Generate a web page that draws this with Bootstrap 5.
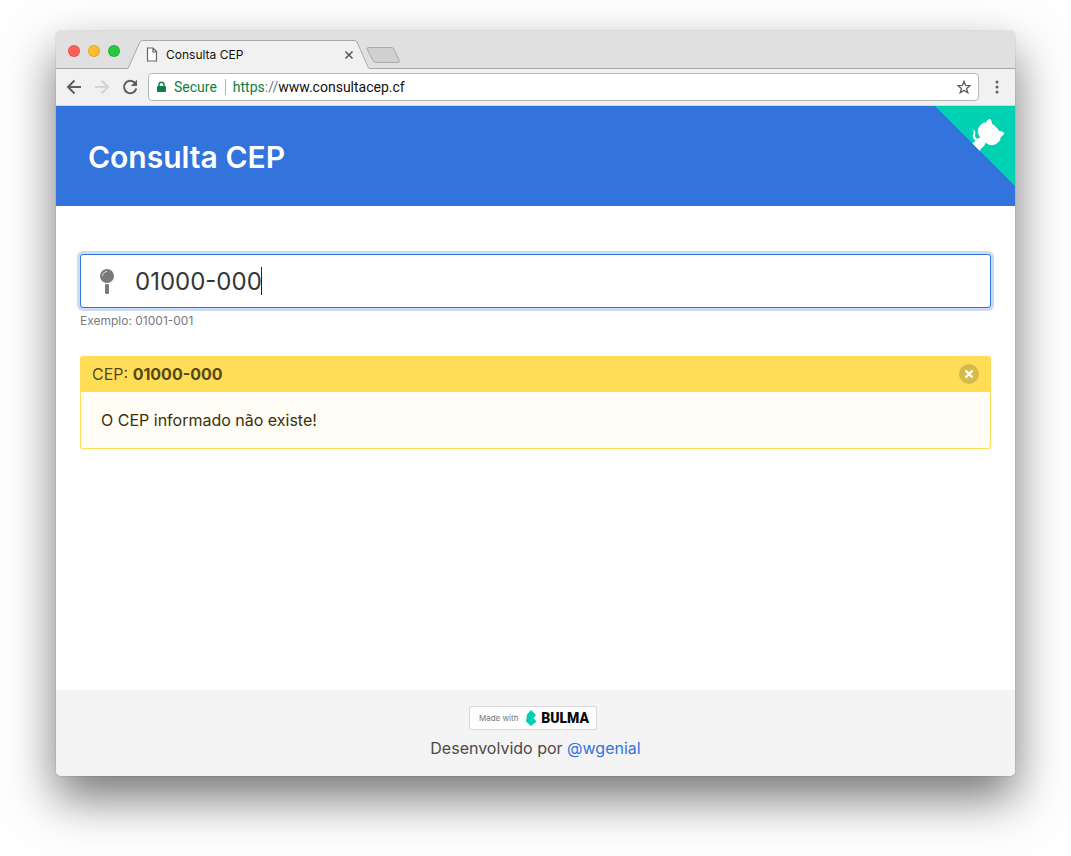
<!DOCTYPE html>
<html lang="pt-BR">
<head>
<meta charset="utf-8">
<meta name="viewport" content="width=device-width, initial-scale=1">
<title>Consulta CEP</title>
<link rel="stylesheet" href="https://cdn.jsdelivr.net/npm/bootstrap@5.3.0/dist/css/bootstrap.min.css">
<style>
body { font-family: Inter, "Liberation Sans", sans-serif; background: #fefefe; color: #4a4a4a; padding: 31px 56px 80px; }
.window { min-height: calc(100vh - 111px); border-radius: 5px; box-shadow: 0 0 1px rgba(0,0,0,.5), 0 22px 48px rgba(0,0,0,.54); }
.tabstrip { height: 38px; background: #e0e0e0; border-bottom: 1px solid #a8a8a8; border-radius: 5px 5px 0 0; padding-left: 12px; }
.light { width: 12px; height: 12px; border-radius: 50%; border: 1px solid rgba(0,0,0,.12); padding: 0; }
.lights { gap: 8px; padding-top: 14px; width: 60px; }
.page-tab { width: 242px; height: 29px; margin-bottom: -1px; padding: 0 16px 0 18px; font-size: 12px; line-height: 29px; color: #111; }
.page-tab .shape { left: 0; top: 0; }
.tab-btn { border: 0; background: none; padding: 0; display: flex; color: #5a5a5a; }
.new-tab { margin: 0 0 4px -4px; }
.toolbar { height: 37px; background: #f1f1f1; border-bottom: 1px solid #d8d8d8; padding: 0 12px 0 10px; gap: 12px; }
.address { height: 28px; border: 1px solid #b8b8b8; border-radius: 4px; background: #fff; margin-left: -2px; padding: 0 7px 0 8px; font: 14px/26px Roboto, sans-serif; }
.secure { color: #0b8043; }
.address .rule { width: 1px; height: 16px; background: #b0b0b0; margin: 0 7px 0 8px; }
.url { color: #111; }
.hero { background: #3273dc; height: 100px; padding: 2px 32px 0; }
.hero h1 { font-size: 30px; line-height: 36px; font-weight: 600; color: #fff; }
.corner { top: 0; right: 0; }
.page { padding: 48px 24px; }
.cep-input { height: 54px; border: 1px solid #3273dc; border-radius: 3px; padding: 0 54px; font-size: 24px; color: #363636; }
.cep-input, .cep-input:focus { border-color: #3273dc; box-shadow: 0 0 0 3px rgba(50,115,220,.25); }
.pin { left: 19px; top: 15px; }
.caret { left: 181px; top: 13px; width: 1px; height: 28px; background: #222; }
.hint { font-size: 12px; line-height: 18px; color: #7a7a7a; margin-top: 4px; margin-bottom: 26px; }
.notice { border-radius: 3px; line-height: 24px; }
.notice-head { background: #ffdd57; color: rgba(0,0,0,.7); height: 36px; padding: 0 12px; border-radius: 3px 3px 0 0; }
.notice-head strong { color: #544817; }
.notice-body { background: #fffdf5; color: #3b3108; border: 1px solid #ffdd57; border-top: 0; border-radius: 0 0 3px 3px; padding: 16px 20px; }
.dismiss { width: 20px; height: 20px; border: 0; border-radius: 50%; background: #d6ba4b; padding: 0; display: flex; }
.page-foot { background: #f4f4f4; height: 86px; padding-top: 16px; border-radius: 0 0 5px 5px; }
.page-foot a { color: #3273dc; text-decoration: none; }
.page-foot .made { width: 128px; height: 24px; border: 1px solid #d9d9d9; border-radius: 2px; background: #fdfdfd; margin-right: 5px; padding: 0 7px 0 9px; font-size: 8px; line-height: 22px; color: #777; }
.page-foot .made b { font: 900 14px/22px Roboto, sans-serif; color: #0a0a0a; }
.credit { line-height: 24px; margin-top: 6px; }
</style>
</head>
<body>
<div class="window d-flex flex-column">
  <div class="tabstrip d-flex">
    <div class="lights d-flex">
      <button class="light" style="background:#ff5f57" aria-label="Close window"></button>
      <button class="light" style="background:#ffbd2e" aria-label="Minimize"></button>
      <button class="light" style="background:#28c940" aria-label="Zoom"></button>
    </div>
    <div class="page-tab position-relative align-self-end d-flex align-items-center">
      <svg class="shape position-absolute" width="242" height="29" fill="#f1f1f1" stroke="#a8a8a8"><path stroke="none" d="M0 29L12 2Q13 .5 15 .5H226Q228 .5 229 2L241 27 242 29Z"/><path fill="none" d="M0 28.500L12 2Q13 .5 15 .5H226Q228 .5 229 2L240 27Q241 28.500 242 28.500"/></svg>
      <svg class="position-relative me-2" width="12" height="15" fill="#fff" stroke="#666" stroke-width="1.200"><path d="M1.500 1H7L10.500 4.500V14H1.500ZM7 1V5H10.500"/></svg>
      <span class="position-relative">Consulta CEP</span>
      <button class="tab-btn position-relative ms-auto" aria-label="Close tab"><svg width="10" height="10" stroke="currentColor" stroke-width="1.600"><path d="M1.500 1.500l7 7M8.500 1.500l-7 7"/></svg></button>
    </div>
    <button class="tab-btn new-tab align-self-end" aria-label="New tab"><svg width="36" height="18" fill="#d0d0d0" stroke="#aaa"><path d="M1 3Q.5 1.500 3 1.500H25Q27 1.500 28 3L33 14Q34 16.500 32 16.500H10Q8 16.500 7 14.500Z"/></svg></button>
  </div>
  <div class="toolbar d-flex align-items-center">
    <button class="tab-btn" aria-label="Back"><svg width="16" height="16" fill="none" stroke="#5f5f5f" stroke-width="2"><path d="M15 8H2M8.500 1.500L2 8l6.500 6.500"/></svg></button>
    <button class="tab-btn" aria-label="Forward"><svg width="16" height="16" fill="none" stroke="#d3d3d3" stroke-width="2"><path d="M1 8h13M7.500 1.500L14 8l-6.500 6.500"/></svg></button>
    <button class="tab-btn" aria-label="Reload"><svg width="16" height="16" fill="none" stroke="#5f5f5f" stroke-width="2"><path d="M13 4A6.200 6.200 0 1 0 14.300 9.500"/><path fill="#5f5f5f" stroke="none" d="M15 .8V7H8.800Z"/></svg></button>
    <div class="address d-flex align-items-center flex-grow-1">
      <svg class="me-2" width="9" height="12" viewBox="0 0 10 12" fill="#0b8043"><path d="M1.500 5V3.500a3.500 3.500 0 0 1 7 0V5H9Q10 5 10 6v4.500Q10 11.500 9 11.500H1Q0 11.500 0 10.500V6Q0 5 1 5ZM3 5H7V3.500a2 2 0 0 0-4 0Z"/></svg>
      <span class="secure">Secure</span><span class="rule"></span>
      <span class="url"><span class="secure">https</span><span class="text-secondary">://</span>www.consultacep.cf</span>
      <button class="tab-btn ms-auto" aria-label="Bookmark"><svg width="14" height="14" viewBox="0 0 16 16" fill="none" stroke="#5f5f5f" stroke-width="1.500"><path d="M8 1.500l1.800 4.700 5.200.2-4.100 3.200 1.500 5L8 11.800l-4.400 2.800 1.500-5L1 6.400l5.200-.2Z"/></svg></button>
    </div>
    <button class="tab-btn" aria-label="Menu"><svg width="12" height="14" fill="#5f5f5f"><circle cx="6" cy="2" r="1.500"/><circle cx="6" cy="7" r="1.500"/><circle cx="6" cy="12" r="1.500"/></svg></button>
  </div>
  <header class="hero position-relative d-flex align-items-center">
    <h1 class="mb-0">Consulta CEP</h1>
    <a class="corner position-absolute d-flex" href="#" aria-label="GitHub">
      <svg width="80" height="80" viewBox="0 0 250 250" fill="#fff"><path fill="#00d1b2" d="M0 0L250 250V0Z"/><path d="M128.3,109.0 C113.8,99.7 119.0,89.6 119.0,89.6 C122.0,82.7 120.5,78.6 120.5,78.6 C119.2,72.0 123.4,76.3 123.4,76.3 C127.3,80.9 125.5,87.3 125.5,87.3 C122.9,97.6 130.6,101.9 134.4,103.2"/><path d="M115.0,115.0 C114.9,115.1 118.7,116.5 119.8,115.4 L133.7,101.6 C136.9,99.2 139.9,98.4 142.2,98.6 C133.8,88.0 127.5,74.4 143.8,58.0 C148.5,53.4 154.0,51.2 159.7,51.0 C160.3,49.4 163.2,43.6 171.4,40.1 C171.4,40.1 176.1,42.5 178.8,56.2 C183.1,58.6 187.2,61.8 190.9,65.4 C194.5,69.0 197.7,73.2 200.1,77.6 C213.8,80.2 216.3,84.9 216.3,84.9 C212.7,93.1 206.9,96.0 205.4,96.6 C205.1,102.4 203.0,107.8 198.3,112.5 C181.9,128.9 168.3,122.5 157.7,114.1 C157.9,116.9 156.7,120.9 152.7,124.9 L141.0,136.5 C139.8,137.7 141.6,141.9 141.8,141.8 Z"/></svg>
    </a>
  </header>
  <main class="page flex-grow-1 bg-white">
    <div class="position-relative">
      <input class="form-control cep-input" type="text" id="cep" value="01000-000" aria-label="CEP" aria-describedby="hint">
      <svg class="pin position-absolute" width="16" height="26" fill="#7a7a7a"><circle cx="8" cy="7" r="7"/><rect x="6" y="15" width="4" height="10" rx="1"/><path d="M3.500 7A4.500 4.500 0 0 1 8 2.500" fill="none" stroke="#ddd"/></svg>
      <span class="caret position-absolute"></span>
    </div>
    <p class="hint" id="hint">Exemplo: 01001-001</p>
    <article class="notice">
      <div class="notice-head d-flex align-items-center justify-content-between">
        <span>CEP: <strong>01000-000</strong></span>
        <button class="dismiss align-items-center justify-content-center" aria-label="Fechar"><svg width="10" height="10" stroke="#fff" stroke-width="2.400"><path d="M1.500 1.500l7 7M8.500 1.500l-7 7"/></svg></button>
      </div>
      <div class="notice-body">O CEP informado não existe!</div>
    </article>
  </main>
  <footer class="page-foot d-flex flex-column align-items-center">
    <a class="made d-flex align-items-center" href="#"><span>Made with</span><svg class="ms-auto me-1" width="11" height="16" fill="#00d1b2"><path d="M5 0L10 5 7.500 8 10.500 11.500 5 16 0 11.500 1 4.500Z"/></svg><b>BULMA</b></a>
    <div class="credit">Desenvolvido por <a href="#">@wgenial</a></div>
  </footer>
</div>
<script src="https://cdn.jsdelivr.net/npm/bootstrap@5.3.0/dist/js/bootstrap.bundle.min.js"></script>
</body>
</html>
